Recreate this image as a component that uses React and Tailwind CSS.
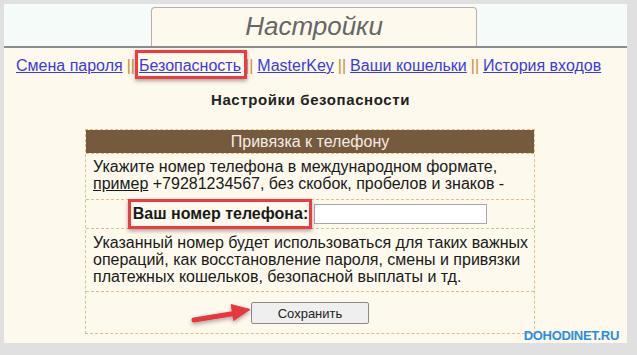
import React from "react";

const sep = <span className="text-[#c8903c] mx-[4px]">||</span>;

export default function App() {
  return (
    <div className="w-[637px] h-[355px] bg-[#e0e0e0] pt-[4px] pl-[4px] overflow-hidden" style={{ fontFamily: '"Liberation Sans", Arial, sans-serif' }}>
      <div className="relative w-[623px] h-[339px] bg-[#fdf9ec] flex flex-col">
        <div className="h-[42px] bg-[#f5fbf8] flex justify-center items-end">
          <div className="w-[326px] h-[39px] border border-b-0 border-[#c4a9a6] rounded-t-[4px] bg-[#fdf9ec] flex justify-center items-center pb-[3px] ml-[-3px]">
            <span className="italic text-[26px] leading-none text-[#666666]">Настройки</span>
          </div>
        </div>
        <div className="h-[2px] bg-[#8c8c8c]" />
        <div className="pt-[9px] pl-[12px] text-[16px] leading-[18px] whitespace-nowrap">
          <a className="text-[#3b3bdb] underline">Смена пароля</a>
          {sep}
          <span className="relative">
            <a className="text-[#3b3bdb] underline">Безопасность</a>
            <span className="absolute -left-[4px] -right-[6px] -top-[7px] -bottom-[5px] border-[3px] border-[#ee3b3f] shadow-[0_2px_4px_rgba(0,0,0,0.35)]" />
          </span>
          {sep}
          <a className="text-[#3b3bdb] underline">MasterKey</a>
          {sep}
          <a className="text-[#3b3bdb] underline">Ваши кошельки</a>
          {sep}
          <a className="text-[#3b3bdb] underline">История входов</a>
        </div>
        <div className="mt-[17px] text-center text-[15px] leading-[16px] font-bold text-[#222] pr-[10px] tracking-[0.6px]">Настройки безопасности</div>
        <div className="mt-[21px] ml-[81px] w-[450px] border border-dashed border-[#dcc08e] text-[16px] text-[#1a1a1a]">
          <div className="h-[23px] bg-[#765a3e] text-[#f4ece4] text-center leading-[23px]">Привязка к телефону</div>
          <div className="border-t border-dashed border-[#dcc08e] px-[7px] pt-[4px] pb-[7px] leading-[17px] whitespace-nowrap">
            Укажите номер телефона в международном формате,<br />
            <span className="underline">пример</span> +79281234567, без скобок, пробелов и знаков -
          </div>
          <div className="border-t border-dashed border-[#dcc08e] h-[29px] flex justify-center items-center gap-[6px]">
            <span className="relative font-bold leading-[18px]">
              Ваш номер телефона:
              <span className="absolute -left-[5px] -right-[4px] -top-[6px] -bottom-[6px] border-[3px] border-[#ee3b3f] shadow-[0_2px_4px_rgba(0,0,0,0.35)]" />
            </span>
            <div className="w-[173px] h-[20px] bg-white border border-[#a8a8a8]" />
          </div>
          <div className="border-t border-dashed border-[#dcc08e] px-[7px] pt-[5px] pb-[6px] leading-[17px] whitespace-nowrap">
            Указанный номер будет использоваться для таких важных<br />
            операций, как восстановление пароля, смены и привязки<br />
            платежных кошельков, безопасной выплаты и тд.
          </div>
          <div className="border-t border-dashed border-[#dcc08e] h-[42px] flex justify-center items-start pt-[10px]">
            <button className="w-[118px] h-[22px] bg-[#efefef] border border-[#8a8a8a] rounded-[2px] text-[13px] text-[#222] leading-none">Сохранить</button>
          </div>
        </div>
        <svg className="absolute left-0 top-0 pointer-events-none" width="623" height="339" viewBox="0 0 623 339">
          <defs>
            <filter id="sh" x="-20%" y="-50%" width="140%" height="200%">
              <feDropShadow dx="0" dy="2" stdDeviation="2" floodColor="#000" floodOpacity="0.35" />
            </filter>
          </defs>
          <g filter="url(#sh)" fill="#e8383d" stroke="#e8383d">
            <line x1="190" y1="316" x2="230" y2="309.5" strokeWidth="5" strokeLinecap="round" />
            <polygon points="246,305.5 229.6,316.5 227.2,300.6" strokeWidth="1" strokeLinejoin="round" />
          </g>
        </svg>
        <div className="absolute right-[8px] bottom-[1px] text-[13px] leading-[13px] font-bold text-[#2b8de0] tracking-[-0.3px]">DOHODINET.RU</div>
      </div>
    </div>
  );
}
